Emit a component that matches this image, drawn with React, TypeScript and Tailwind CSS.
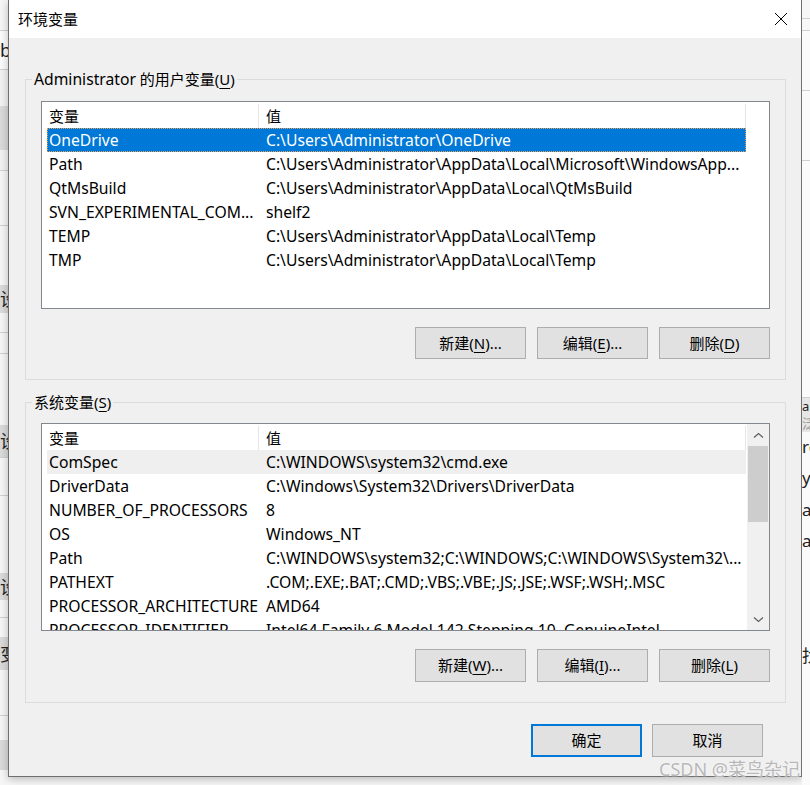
import React from 'react';

const uiFont = "font-['Noto_Sans','Noto_Sans_CJK_SC',sans-serif]";

interface Row {
  name: string;
  value: string;
}

const userVars: Row[] = [
  { name: 'OneDrive', value: 'C:\\Users\\Administrator\\OneDrive' },
  { name: 'Path', value: 'C:\\Users\\Administrator\\AppData\\Local\\Microsoft\\WindowsApp...' },
  { name: 'QtMsBuild', value: 'C:\\Users\\Administrator\\AppData\\Local\\QtMsBuild' },
  { name: 'SVN_EXPERIMENTAL_COM...', value: 'shelf2' },
  { name: 'TEMP', value: 'C:\\Users\\Administrator\\AppData\\Local\\Temp' },
  { name: 'TMP', value: 'C:\\Users\\Administrator\\AppData\\Local\\Temp' },
];

const systemVars: Row[] = [
  { name: 'ComSpec', value: 'C:\\WINDOWS\\system32\\cmd.exe' },
  { name: 'DriverData', value: 'C:\\Windows\\System32\\Drivers\\DriverData' },
  { name: 'NUMBER_OF_PROCESSORS', value: '8' },
  { name: 'OS', value: 'Windows_NT' },
  { name: 'Path', value: 'C:\\WINDOWS\\system32;C:\\WINDOWS;C:\\WINDOWS\\System32\\...' },
  { name: 'PATHEXT', value: '.COM;.EXE;.BAT;.CMD;.VBS;.VBE;.JS;.JSE;.WSF;.WSH;.MSC' },
  { name: 'PROCESSOR_ARCHITECTURE', value: 'AMD64' },
  { name: 'PROCESSOR_IDENTIFIER', value: 'Intel64 Family 6 Model 142 Stepping 10, GenuineIntel' },
];

// bits of the window behind the dialog
const leftBands = [
  { h: 30, bg: 'bg-[#f6f6f6]', t: '' },
  { h: 1, bg: 'bg-[#cfcfcf]', t: '' },
  { h: 38, bg: 'bg-[#fbfbfb]', t: 'b' },
  { h: 1, bg: 'bg-[#d0d0d0]', t: '' },
  { h: 36, bg: 'bg-[#f2f2f2]', t: '' },
  { h: 44, bg: 'bg-[#dadada]', t: '' },
  { h: 20, bg: 'bg-[#f2f2f2]', t: '' },
  { h: 1, bg: 'bg-[#d0d0d0]', t: '' },
  { h: 54, bg: 'bg-[#f6f6f6]', t: '' },
  { h: 1, bg: 'bg-[#d0d0d0]', t: '' },
  { h: 59, bg: 'bg-[#f6f6f6]', t: '' },
  { h: 28, bg: 'bg-[#dadada]', t: '设' },
  { h: 19, bg: 'bg-[#f6f6f6]', t: '' },
  { h: 1, bg: 'bg-[#d0d0d0]', t: '' },
  { h: 20, bg: 'bg-[#f6f6f6]', t: '' },
  { h: 1, bg: 'bg-[#d0d0d0]', t: '' },
  { h: 71, bg: 'bg-[#f6f6f6]', t: '' },
  { h: 32, bg: 'bg-[#dadada]', t: '设' },
  { h: 1, bg: 'bg-[#d0d0d0]', t: '' },
  { h: 37, bg: 'bg-[#f6f6f6]', t: '' },
  { h: 1, bg: 'bg-[#d0d0d0]', t: '' },
  { h: 77, bg: 'bg-[#f6f6f6]', t: '' },
  { h: 27, bg: 'bg-[#dadada]', t: '设' },
  { h: 17, bg: 'bg-[#f6f6f6]', t: '' },
  { h: 1, bg: 'bg-[#d0d0d0]', t: '' },
  { h: 19, bg: 'bg-[#f6f6f6]', t: '' },
  { h: 33, bg: 'bg-[#dadada]', t: '变' },
  { h: 45, bg: 'bg-[#f6f6f6]', t: '' },
  { h: 1, bg: 'bg-[#d0d0d0]', t: '' },
  { h: 24, bg: 'bg-[#f6f6f6]', t: '' },
  { h: 30, bg: 'bg-[#dadada]', t: '' },
  { h: 20, bg: 'bg-[#f6f6f6]', t: '' },
];

const rightBands = [
  { h: 18, bg: 'bg-[#f7f7f7]', t: '', s: 'text-[17px]' },
  { h: 1, bg: 'bg-[#d0d0d0]', t: '', s: 'text-[17px]' },
  { h: 11, bg: 'bg-[#f7f7f7]', t: '', s: 'text-[17px]' },
  { h: 1, bg: 'bg-[#d0d0d0]', t: '', s: 'text-[17px]' },
  { h: 59, bg: 'bg-[#fafafa]', t: '', s: 'text-[17px]' },
  { h: 1, bg: 'bg-[#d0d0d0]', t: '', s: 'text-[17px]' },
  { h: 69, bg: 'bg-[#fafafa]', t: '', s: 'text-[17px]' },
  { h: 1, bg: 'bg-[#d0d0d0]', t: '', s: 'text-[17px]' },
  { h: 236, bg: 'bg-[#fafafa]', t: '', s: 'text-[17px]' },
  { h: 1, bg: 'bg-[#d0d0d0]', t: '', s: 'text-[17px]' },
  { h: 16, bg: 'bg-[#e6e6e6]', t: 'ar', s: 'text-[13px]' },
  { h: 18, bg: 'bg-[#e6e6e6]', t: '泛', s: 'text-[13px] text-[#999]' },
  { h: 28, bg: 'bg-[#fafafa]', t: 're', s: 'text-[17px]' },
  { h: 34, bg: 'bg-[#fafafa]', t: 'ys', s: 'text-[17px]' },
  { h: 31, bg: 'bg-[#fafafa]', t: 'at', s: 'text-[17px]' },
  { h: 31, bg: 'bg-[#fafafa]', t: 'ak', s: 'text-[17px]' },
  { h: 84, bg: 'bg-[#fafafa]', t: '', s: 'text-[17px]' },
  { h: 30, bg: 'bg-[#fafafa]', t: '找', s: 'text-[17px]' },
  { h: 115, bg: 'bg-[#fafafa]', t: '', s: 'text-[17px]' },
];

const Chevron: React.FC<{ down?: boolean }> = ({ down }) => (
  <svg width="11" height="7" viewBox="0 0 11 7" className="block">
    <path
      d={down ? 'M1 1.5 L5.5 5.5 L10 1.5' : 'M1 5.5 L5.5 1.5 L10 5.5'}
      fill="none"
      stroke="#606060"
      strokeWidth="1.3"
    />
  </svg>
);

const Key: React.FC<{ k: string }> = ({ k }) => (
  <span className="underline underline-offset-[3px] decoration-1">{k}</span>
);

const WinButton: React.FC<{ children: React.ReactNode; primary?: boolean; tall?: boolean }> = ({
  children,
  primary,
  tall,
}) => (
  <div
    className={
      primary
        ? 'w-[111px] h-[33px] flex items-center justify-center bg-[#e1e1e1] border-2 border-[#0078d7]'
        : tall
        ? 'w-[111px] h-[33px] flex items-center justify-center bg-[#e1e1e1] border border-[#adadad]'
        : 'w-[111px] h-[32px] flex items-center justify-center bg-[#e1e1e1] border border-[#adadad]'
    }
  >
    {children}
  </div>
);

const VarList: React.FC<{ rows: Row[]; selected?: number; hover?: number; scroll?: boolean }> = ({
  rows,
  selected,
  hover,
  scroll,
}) => (
  <div className="ml-[15px] w-[729px] h-[208px] border border-[#828790] bg-white flex overflow-hidden">
    <div className="flex-1 flex flex-col min-w-0 text-[15.7px]">
      <div className="h-[26px] shrink-0 flex pl-[5px] text-[15px] pt-[2px]">
        <div className="w-[212px] pl-[2px] border-r border-[#e5e5e5] flex items-center">变量</div>
        <div className="w-[487px] pl-[7px] border-r border-[#e5e5e5] flex items-center">值</div>
      </div>
      {rows.map((r, i) => (
        <div key={r.name + i} className="pl-[5px]">
          <div
            className={
              i === selected
                ? 'h-[24px] w-[699px] flex items-center pt-[2px] bg-[#0078d7] text-white outline-1 outline-dotted outline-[#e8a25a] -outline-offset-1'
                : i === hover
                ? 'h-[24px] w-[699px] flex items-center pt-[2px] bg-[#efefef]'
                : 'h-[24px] w-[699px] flex items-center pt-[2px]'
            }
          >
            <div className="w-[212px] shrink-0 pl-[2px] whitespace-nowrap">{r.name}</div>
            <div className="w-[487px] shrink-0 pl-[7px] whitespace-nowrap overflow-hidden">{r.value}</div>
          </div>
        </div>
      ))}
    </div>
    {scroll && (
      <div className="w-[22px] shrink-0 bg-[#f0f0f0] flex flex-col">
        <div className="h-[22px] flex items-center justify-center">
          <Chevron />
        </div>
        <div className="mx-[1px] h-[76px] bg-[#cdcdcd]" />
        <div className="flex-1" />
        <div className="h-[22px] flex items-center justify-center">
          <Chevron down />
        </div>
      </div>
    )}
  </div>
);

const Group: React.FC<{ label: React.ReactNode; className: string; children: React.ReactNode }> = ({
  label,
  className,
  children,
}) => (
  <fieldset className={'m-0 p-0 mr-[15px] ml-[16px] h-[311px] border border-[#dcdcdc] ' + className}>
    <legend className="ml-[6px] px-[2px] h-[20px] leading-[20px]">{label}</legend>
    {children}
  </fieldset>
);

export default function App() {
  return (
    <div className={'relative flex w-[810px] h-[785px] overflow-hidden bg-[#f6f6f6] text-[15px] text-black ' + uiFont}>
      <div className="w-[8px] shrink-0 flex flex-col overflow-hidden">
        {leftBands.map((b, i) => (
          <div
            key={i}
            className={'shrink-0 flex items-center overflow-hidden whitespace-nowrap text-[18px] leading-none text-[#222] ' + b.bg}
            style={{ height: b.h }}
          >
            {b.t}
          </div>
        ))}
      </div>

      <div className="w-[794px] h-[777px] shrink-0 flex flex-col bg-[#f0f0f0] border border-t-0 border-[#6f6f6f] shadow-[0_2px_8px_rgba(0,0,0,0.25)]">
        <div className="h-[38px] shrink-0 bg-white flex items-center justify-between pl-[9px] pr-[13px]">
          <span>环境变量</span>
          <svg width="14" height="14" viewBox="0 0 14 14">
            <path d="M1 1 L13 13 M13 1 L1 13" stroke="#000" strokeWidth="1" />
          </svg>
        </div>

        <Group
          className="mt-[31px]"
          label={
            <>
              <span className="text-[15.7px]">Administrator</span> 的用户变量(<Key k="U" />)
            </>
          }
        >
          <div className="mt-[12px]">
            <VarList rows={userVars} selected={0} />
          </div>
          <div className="mt-[18px] ml-[15px] w-[729px] flex justify-end gap-[11px]">
            <WinButton>
              新建(<Key k="N" />)...
            </WinButton>
            <WinButton>
              编辑(<Key k="E" />)...
            </WinButton>
            <WinButton>
              删除(<Key k="D" />)
            </WinButton>
          </div>
        </Group>

        <Group
          className="mt-[12px]"
          label={
            <>
              系统变量(<Key k="S" />)
            </>
          }
        >
          <div className="mt-[11px]">
            <VarList rows={systemVars} hover={0} scroll />
          </div>
          <div className="mt-[18px] ml-[15px] w-[729px] flex justify-end gap-[11px]">
            <WinButton tall>
              新建(<Key k="W" />)...
            </WinButton>
            <WinButton tall>
              编辑(<Key k="I" />)...
            </WinButton>
            <WinButton tall>
              删除(<Key k="L" />)
            </WinButton>
          </div>
        </Group>

        <div className="mt-[21px] pr-[38px] flex justify-end gap-[10px]">
          <WinButton primary>确定</WinButton>
          <WinButton tall>取消</WinButton>
        </div>
      </div>

      <div className="flex-1 flex flex-col overflow-hidden">
        {rightBands.map((b, i) => (
          <div
            key={i}
            className={'shrink-0 flex items-center overflow-hidden whitespace-nowrap leading-none text-[#222] ' + b.s + ' ' + b.bg}
            style={{ height: b.h }}
          >
            {b.t}
          </div>
        ))}
      </div>

      <div className="absolute left-[659px] top-[756px] text-[18px] text-[#b8b8b8] whitespace-nowrap [text-shadow:0_0_2px_#fff]">
        CSDN @菜鸟杂记
      </div>
    </div>
  );
}
